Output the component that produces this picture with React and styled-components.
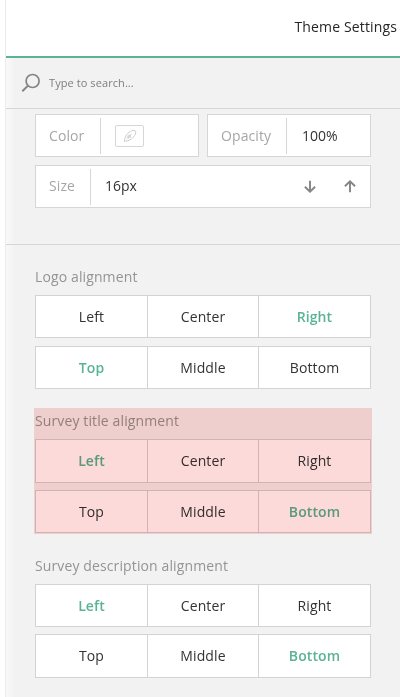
import React from "react";
import styled, { createGlobalStyle } from "styled-components";

const GlobalStyle = createGlobalStyle`
  * { box-sizing: border-box; }
  body {
    margin: 0;
    background: #fff;
    font-family: "Open Sans", "Noto Sans", sans-serif;
    font-size: 14px;
    color: #333;
  }
`;

const Page = styled.div`
  display: flex;
  width: 400px;
  height: 697px;
  padding-left: 5px;
  overflow: hidden;
`;

const Panel = styled.aside`
  flex: 1;
  display: flex;
  flex-direction: column;
  border-left: 1px solid #ebebeb;
`;

const Header = styled.header`
  flex: none;
  display: flex;
  align-items: center;
  justify-content: flex-end;
  height: 58px;
  padding: 0 3px 2px 0;
  border-bottom: 2px solid #5ab393;
  color: #262626;
`;

const Title = styled.h1`
  margin: 0;
  font-size: 14px;
  line-height: 20px;
  font-weight: 400;
  letter-spacing: 0.14px;
`;

const Body = styled.div`
  flex: 1;
  background: linear-gradient(90deg, #f9f9f9 0, #f6f6f6 4px, #f2f2f2 9px);
`;

const SearchBar = styled.label`
  display: flex;
  align-items: center;
  height: 51px;
  padding-left: 15px;
  border-bottom: 1px solid #d6d6d6;
`;

const SearchInput = styled.input`
  width: 200px;
  margin-left: 8px;
  padding: 0;
  border: 0;
  outline: 0;
  background: transparent;
  font: 11px/16px "Open Sans", sans-serif;
  letter-spacing: 0.08px;
  &::placeholder { color: #7d7d7d; opacity: 1; }
`;

const FontSettings = styled.section`
  display: grid;
  grid-template-columns: 164px 164px;
  grid-auto-rows: 43px;
  gap: 8px;
  height: 136px;
  padding: 5px 0 0 29px;
  border-bottom: 1px solid #d6d6d6;
`;

const Field = styled.div`
  display: flex;
  align-items: center;
  grid-column: ${(p) => (p.$wide ? "1 / -1" : "auto")};
  border: 1px solid #d6d6d6;
  background: #fff;
`;

const FieldLabel = styled.span`
  width: ${(p) => p.$width}px;
  height: 36px;
  padding-left: 13px;
  border-right: 1px solid #d6d6d6;
  line-height: ${(p) => (p.$raised ? 33 : 35)}px;
  letter-spacing: 0.1px;
  color: #a6a6a6;
`;

const FieldValue = styled.span`
  padding-left: ${(p) => (p.$raised ? 14 : 15)}px;
  line-height: ${(p) => (p.$raised ? 33 : 35)}px;
  height: 36px;
`;

const Swatch = styled.button`
  display: flex;
  align-items: center;
  justify-content: center;
  width: 29px;
  height: 22px;
  margin-left: 14px;
  padding: 0;
  border: 1px solid #d6d6d6;
  border-radius: 2px;
  background: #fff;
`;

const Stepper = styled.div`
  display: flex;
  gap: 28px;
  margin-left: auto;
  padding: 0 14px 1px 0;
`;

const StepButton = styled.button`
  display: flex;
  padding: 0;
  border: 0;
  background: none;
  color: #858585;
`;

const Groups = styled.div`
  display: flex;
  flex-direction: column;
  padding: 19px 0 0 28px;
`;

const Group = styled.section`
  width: 338px;
  height: ${(p) => p.$height}px;
  margin-bottom: ${(p) => p.$after}px;
  padding: 0 1px;
  position: relative;
  &::after {
    content: ${(p) => (p.$marked ? '""' : "none")};
    position: absolute;
    inset: 0;
    background: #fcdad9;
    mix-blend-mode: multiply;
    pointer-events: none;
  }
`;

const GroupTitle = styled.h2`
  margin: 0;
  height: 31px;
  font-size: 14px;
  font-weight: 400;
  line-height: 26px;
  letter-spacing: 0.12px;
  color: #949494;
`;

const Segments = styled.div`
  display: grid;
  grid-template-columns: 112px 111px 111px;
  height: ${(p) => p.$height}px;
  margin-bottom: ${(p) => p.$after}px;
  border: 1px solid #d3d3d3;
  background: #fff;
`;

const Segment = styled.button`
  padding: 0 0 1px;
  border: 0;
  border-right: 1px solid #d3d3d3;
  background: none;
  font: inherit;
  font-weight: ${(p) => (p.$active ? 600 : 400)};
  letter-spacing: 0.1px;
  color: ${(p) => (p.$active ? "#5ab393" : "#333")};
  &:last-child { border-right: 0; }
`;

const HORIZONTAL = ["Left", "Center", "Right"];
const VERTICAL = ["Top", "Middle", "Bottom"];

const groups = [
  { title: "Logo alignment", x: "Right", y: "Top", h: [43, 43], gap: 8, height: 125, after: 19 },
  { title: "Survey title alignment", x: "Left", y: "Bottom", h: [44, 43], gap: 7, height: 126, after: 19, marked: true },
  { title: "Survey description alignment", x: "Left", y: "Bottom", h: [43, 44], gap: 7, height: 125, after: 0 },
];

function SegmentRow({ options, active, height, after }) {
  return (
    <Segments $height={height} $after={after}>
      {options.map((o) => (
        <Segment key={o} $active={o === active}>{o}</Segment>
      ))}
    </Segments>
  );
}

const SearchIcon = () => (
  <svg width="20" height="20" viewBox="0 0 20 20" fill="none" stroke="#858585" strokeWidth="1.7">
    <circle cx="11.6" cy="8" r="6.5" />
    <path d="M7 12.6 L1.3 18.3" strokeWidth="2" />
  </svg>
);

const FeatherIcon = () => (
  <svg width="14" height="14" viewBox="0 0 14 14" fill="none" stroke="#cdcdcd" strokeWidth="1">
    <path d="M1.4 12.4 C1.3 9 3.6 4.8 7.4 2.4 C9.6 1 12.6 1 12.8 2.8 C13 5.8 9 10.6 5 11.7 C3.6 12.1 2.4 11.8 1.4 12.4 Z" />
    <path d="M3.6 9.9 L8.6 4.9" />
    <ellipse cx="6.2" cy="7.6" rx="1.5" ry="1.1" transform="rotate(-45 6.2 7.6)" />
  </svg>
);

const Arrow = ({ up }) => (
  <svg width="12" height="13" viewBox="0 0 12 13" fill="none" stroke="currentColor" strokeWidth="1.9">
    {up ? (
      <path d="M6 12.3 V1.5 M0.9 6.3 L6 1.3 L11.1 6.3" />
    ) : (
      <path d="M6 0.7 V11.5 M0.9 6.7 L6 11.7 L11.1 6.7" />
    )}
  </svg>
);

export default function App() {
  return (
    <Page>
      <GlobalStyle />
      <Panel>
        <Header>
          <Title>Theme Settings</Title>
        </Header>
        <Body>
          <SearchBar>
            <SearchIcon />
            <SearchInput placeholder="Type to search..." />
          </SearchBar>
          <FontSettings>
            <Field>
              <FieldLabel $width={65}>Color</FieldLabel>
              <Swatch aria-label="Pick color"><FeatherIcon /></Swatch>
            </Field>
            <Field>
              <FieldLabel $width={79}>Opacity</FieldLabel>
              <FieldValue>100%</FieldValue>
            </Field>
            <Field $wide>
              <FieldLabel $width={55} $raised>Size</FieldLabel>
              <FieldValue $raised>16px</FieldValue>
              <Stepper>
                <StepButton aria-label="Decrease"><Arrow /></StepButton>
                <StepButton aria-label="Increase"><Arrow up /></StepButton>
              </Stepper>
            </Field>
          </FontSettings>
          <Groups>
            {groups.map((g) => (
              <Group key={g.title} $height={g.height} $after={g.after} $marked={g.marked}>
                <GroupTitle>{g.title}</GroupTitle>
                <SegmentRow options={HORIZONTAL} active={g.x} height={g.h[0]} after={g.gap} />
                <SegmentRow options={VERTICAL} active={g.y} height={g.h[1]} after={0} />
              </Group>
            ))}
          </Groups>
        </Body>
      </Panel>
    </Page>
  );
}
